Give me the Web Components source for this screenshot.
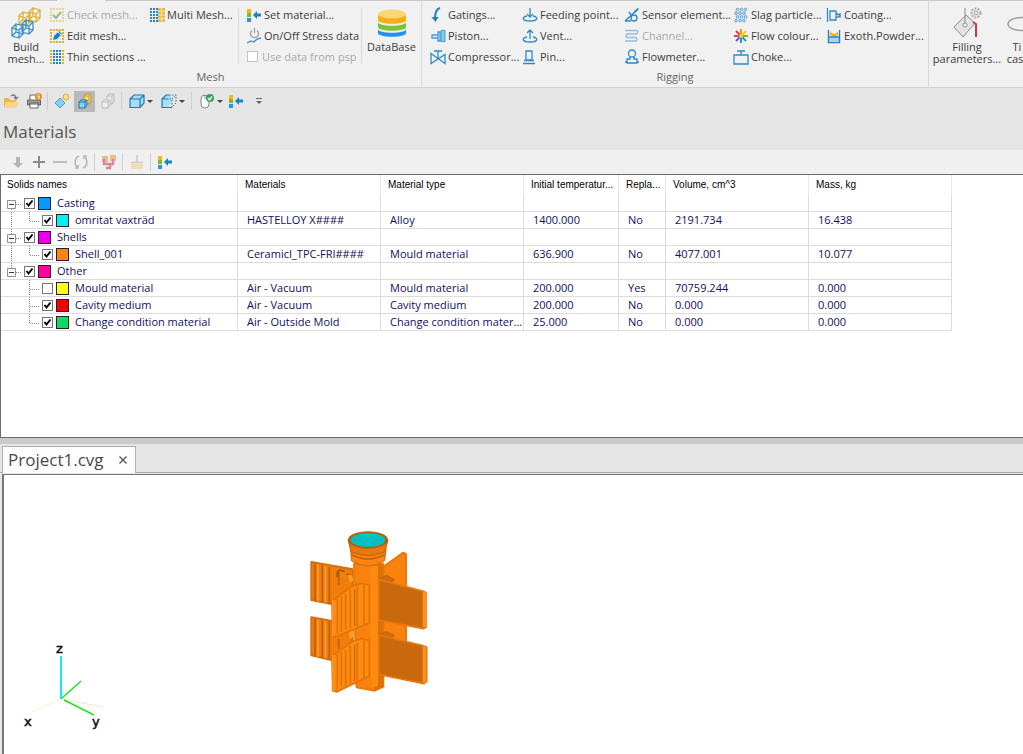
<!DOCTYPE html>
<html lang="en">
<head>
<meta charset="utf-8">
<title>Project1.cvg</title>
<style>
    html, body { margin: 0; height: 100%; overflow: hidden; }
    body { font: 11px/12px "Open Sans", "Noto Sans", sans-serif; color: #3c3c3c; background: #e5e5e5; }
</style>
</head>
<body>
<casting-app></casting-app>

<script>
// small shared drawings
const LIST_ARROW = `<path fill="#f3b81f" d="M1 2h4v4H1z"/><path fill="#84b81c" d="M1 6h4v4H1z"/><path fill="#2196f3" d="M1 11h4v4H1z"/><path fill="#1583c4" d="M7 8l4-4v2.500h4v3h-4V12z"/>`;

function dots(x0, y0, cols, rows, step, size, color) {
    let d = '';
    for (let r = 0; r < rows; r++) {
        for (let c = 0; c < cols; c++) d += `M${x0 + c * step} ${y0 + r * step}h${size}v${size}h-${size}z`;
    }
    return `<path fill="${color}" d="${d}"/>`;
}

function rings() {
    let out = '';
    for (let r = 0; r < 4; r++) {
        for (let c = 0; c < 3; c++) out += `<circle cx="${(r % 2 ? 3 : 4.5) + c * 4}" cy="${2.5 + r * 3.7}" r="1.3"/>`;
    }
    return `<g fill="none" stroke="#4a9bd4">${out}</g>`;
}

// wire cube, all twelve edges
function wire(x, y) {
    return `M${x} ${y + 4}l4-4 7 2-4 4zv8l7 2v-8M${x + 7} ${y + 14}l4-4v-8M${x + 4} ${y}v8l7 2M${x + 4} ${y + 8}l-4 4`;
}

const CUBE = '<path d="M1 6l4-4h10v8l-4 4.500H1zM1 6h10v8.500M11 6l4-4"/>';

// name -> [viewBox size, markup]
const ICONS = {
    build: [32, `<g fill="none"><path stroke="#dfae2b" stroke-width="1.200" d="${wire(9, 5)}${wire(19, 1)}"/><path stroke="#3d8fc8" stroke-width="1.300" d="${wire(2, 17)}${wire(12, 13)}"/></g>`],
    check: [16, dots(1, 1, 5, 5, 3, 2, '#ecd28f') + '<path fill="#f1f1f1" d="M3.500 4h9v8h-9z"/><path fill="none" stroke="#8cbc9c" stroke-width="2" d="M4 8l3 3 5-6"/>'],
    edit: [16, dots(1, 1, 5, 5, 3, 2, '#e5ad2c') + '<path fill="#f1f1f1" d="M3.500 4h9v8h-9z"/><path fill="#1b7fd0" d="M4 12l1-4 5-5 3 3-5 5z"/><path stroke="#fff" d="M9 4l3 3"/>'],
    thin: [16, dots(1, 1, 1, 5, 3, 2, '#e5ad2c') + dots(4, 1, 3, 5, 3, 2, '#1b7fd0') + dots(13, 1, 1, 5, 3, 2, '#e5ad2c')],
    multi: [16, dots(1, 1, 3, 5, 3, 2, '#2b84c4') + '<path fill="#e9b949" d="M9 1h7v14H9z"/><path stroke="#f7e4b2" d="M12.500 1v14M9 4.500h7M9 8h7M9 11.500h7"/>'],
    setmat: [16, LIST_ARROW],
    power: [16, '<g fill="none"><path stroke="#999" stroke-width="1.200" d="M6 2.500a4 4 0 1 0 5 0M8.500 0v5"/><path stroke="#3d8fc8" stroke-width="1.300" d="M1 15l4-2 3 1 3-3 4-1"/></g>'],
    database: [32, `<path fill="#2491ee" d="M2 20v6c0 5 28 5 28 0v-6z"/><path fill="#f1f1f1" d="M2 17v5c0 5 28 5 28 0v-5z"/>
        <path fill="#7cc52e" d="M2 14v6c0 5 28 5 28 0v-6z"/><path fill="#f1f1f1" d="M2 11v4c0 5 28 5 28 0v-4z"/>
        <path fill="#f5ae16" d="M2 7v6c0 5 28 5 28 0V7z"/><ellipse cx="16" cy="7" rx="14" ry="4.500" fill="#f8d775"/>`],
    gating: [16, '<path fill="none" stroke="#2580bd" stroke-width="2" d="M10 1C6 2 5 6 5 12"/><path fill="#2580bd" d="M1.500 10h7l-3 5z"/>'],
    piston: [16, '<path fill="none" stroke="#3d9ad5" stroke-width="1.300" d="M2 7h6v3H2zM8 4h2v9H8z"/><path fill="#8fc7e8" stroke="#3d9ad5" d="M11 2.500h4v11h-4z"/>'],
    compressor: [16, '<path fill="none" stroke="#2f8ac6" stroke-width="1.300" d="M1 4.500v10l14-9v9zM4 2h8M8 2v7"/>'],
    feed: [16, '<path fill="none" stroke="#2f8ac6" stroke-width="1.300" d="M8 1v9M5 7l3 3 3-3M5 9C-1 10 0 14 8 14s9-4 3-5"/>'],
    vent: [16, '<path fill="none" stroke="#2f8ac6" stroke-width="1.300" d="M8 11V2M5 5l3-3 3 3M5 9C-1 10 0 14 8 14s9-4 3-5"/>'],
    pin: [16, '<path fill="none" stroke="#2f8ac6" stroke-width="1.300" d="M4 2h6v9H4zM2 11.500h10M1 14.500h12"/>'],
    sensor: [16, '<g fill="none" stroke="#2f8ac6" stroke-width="1.400"><path d="M1 14L14 2M7 8L5 5M1 14h6"/><circle cx="10" cy="11" r="3"/></g><path fill="#2f8ac6" d="M10 4l4-3 1 1-4 4z"/>'],
    channel: [16, '<path fill="none" stroke="#92c0dd" stroke-width="1.500" d="M1 2.500h12q2 2-1 3.500H3q-2 1.500 0 3.500h9q2 1.500 0 3.500H1"/>'],
    flowmeter: [16, '<g fill="none" stroke="#2f8ac6" stroke-width="1.300"><circle cx="8" cy="4.500" r="3.500"/><path d="M6 8v2H3v3H1M10 8v2h3v3h2M3 10v4h10v-4"/></g>'],
    slag: [16, rings()],
    colour: [16, `<g stroke-width="2"><path stroke="#e34234" d="M8 8L3 3"/><path stroke="#f39a1e" d="M8 8V1"/><path stroke="#f3c41e" d="M8 8l5-5"/><path stroke="#7ab929" d="M8 8h7"/>
        <path stroke="#21a38b" d="M8 8l5 5"/><path stroke="#2491ee" d="M8 8v7"/><path stroke="#7a52b8" d="M8 8l-5 5"/><path stroke="#d43f77" d="M8 8H1"/></g><circle cx="8" cy="8" r="2" fill="#f8cf3a"/>`],
    choke: [16, '<path fill="none" stroke="#2f8ac6" stroke-width="1.300" d="M1 6h14v9H1zM8 6V2M4 2h8"/>'],
    coating: [16, '<path fill="none" stroke="#2f8ac6" stroke-width="1.300" d="M1.500 1v14M4 4h6v9H4zM10 6l4 2.500-4 2.500M14 6v5"/>'],
    powder: [16, '<path fill="#f2b12a" d="M4 4l4 2 4-2v3l-4 2-4-2z"/><path fill="#a8d4f0" d="M3 9h10v4H3z"/><path fill="none" stroke="#2481c4" stroke-width="1.400" d="M2.500 2v12.500h11V2M2.500 9h11"/>'],
    filling: [32, `<path fill="#e3e3e3" stroke="#8a8a8a" d="M3 20L15 8l9 8-12 14z"/><path fill="none" stroke="#8a8a8a" d="M14 1v16"/><circle cx="14" cy="18" r="2" fill="#fff" stroke="#8a8a8a"/>
        <path fill="none" stroke="#d9343e" stroke-width="2" d="M22 15l3 2v13"/><circle cx="25" cy="6" r="4.500" fill="none" stroke="#aaa" stroke-width="2" stroke-dasharray="2 1.200"/><circle cx="25" cy="6" r="2" fill="none" stroke="#999"/>`],
    tilt: [32, '<ellipse cx="21" cy="17" rx="14" ry="6.500" fill="none" stroke="#999" stroke-width="1.300"/>'],
    open: [16, '<path fill="#e9b949" d="M1 5h5l1 2h6v8H1z"/><path fill="#f8d77d" d="M3 9h13l-3 6H1z"/><path fill="none" stroke="#777" stroke-width="1.300" d="M8 3c3-2 5-1 5 3M11 4l2 2 2-2"/>'],
    print: [16, '<path fill="#fff" stroke="#666" d="M4 7V2h7v5M4 11h8v4H4z"/><path fill="#9a9a9a" stroke="#666" d="M1.500 7h13v5h-2v-2h-9v2h-2z"/><circle cx="12.500" cy="3.500" r="3.500" fill="#f08a24"/><path stroke="#fff" d="M13 1l-1 2.500h1.500l-1 2.500" fill="none"/>'],
    diamond: [16, '<path fill="#8ecbf0" stroke="#4a9bd4" d="M6 5l5 5-5 5-5-5z"/><circle cx="12" cy="4" r="3" fill="#f8dc8c" stroke="#dfae2b"/>'],
    cubes: [16, '<path fill="#fbd97c" stroke="#c9961c" d="M7 3l2-2h5v8l-2 2H7zM7 3h5v8M12 3l2-2"/><path fill="#8fd0f5" stroke="#2078ad" d="M2 9l2-2h6v5l-2 3H2zM2 9h6v6M8 9l2-2"/>'],
    cubesoff: [16, '<g fill="#eee" stroke="#bbb"><path d="M7 3l2-2h5v8l-2 2H7zM7 3h5v8M12 3l2-2"/><path d="M2 9l2-2h6v5l-2 3H2zM2 9h6v6M8 9l2-2"/></g>'],
    cube: [16, `<g fill="#a6dcfa" stroke="#2078ad" stroke-width="1.200">${CUBE}</g>`],
    ghost: [16, '<path fill="#a6dcfa" d="M1 6l4-4h5v8l-4 4.500H1z"/><path fill="none" stroke="#2078ad" stroke-width="1.200" d="M11 14.500H1V6l4-4h3M1 6h5"/><path fill="none" stroke="#2078ad" stroke-dasharray="1.500 1.500" d="M8 2h7v8l-4 4M6 6h5v8M11 6l4-4"/>'],
    mouse: [16, '<rect x="2" y="2" width="8" height="13" rx="4" fill="#fff" stroke="#888"/><path stroke="#888" d="M6 2v4"/><circle cx="11" cy="5" r="4" fill="#3a9f52"/><path fill="none" stroke="#fff" stroke-width="1.300" d="M9 5l1.500 2L13 3.500"/>'],
    more: [16, '<path fill="#666" d="M5 5h6v1H5zM5 8h6l-3 3z"/>'],
    down: [16, '<path fill="#b5b5b5" d="M6 3h4v6h3l-5 5-5-5h3z"/>'],
    plus: [16, '<path fill="#8b8b8b" d="M7 2h2v5h5v2H9v5H7V9H2V7h5z"/>'],
    minus: [16, '<path fill="#bdbdbd" d="M1 7h14v2H1z"/>'],
    refresh: [16, '<path fill="none" stroke="#b5b5b5" stroke-width="1.500" d="M6 2C1 4 1 11 5 14M10 14c5-2 5-9 1-12M2 14h3v-3M14 2h-3v3"/>'],
    tree: [16, '<path fill="#e7bd8d" d="M1 2h6v6H1zM9 1h6v6H9z"/><path fill="none" stroke="#d5879b" stroke-width="2.500" d="M3 5v5h9V5M9 10v4H5"/>'],
    tray: [16, '<path fill="#f1dfa9" d="M2 10h12v5H2z"/><path stroke="#c9c9c9" stroke-width="1.500" d="M8 1v7M2 8.500h12"/>'],
};

// <ui-icon name="...">: one drawing out of ICONS
class UiIcon extends HTMLElement {
    connectedCallback() {
        const [size, markup] = ICONS[this.getAttribute('name')];
        this.attachShadow({ mode: 'open' }).innerHTML = `
<style>
    :host { display: block; flex: none; width: ${size}px; height: ${size}px; }
    svg { display: block; }
</style>
<svg width="${size}" height="${size}" viewBox="0 0 ${size} ${size}" aria-hidden="true">${markup}</svg>`;
    }
}

// <ribbon-button icon large disabled>Text</ribbon-button>
class RibbonButton extends HTMLElement {
    connectedCallback() {
        this.attachShadow({ mode: 'open' }).innerHTML = `
<style>
    :host { display: block; }
    button {
        display: flex; align-items: center; gap: 2px; height: 21px; padding: 0;
        border: 0; background: none; font: inherit; color: inherit; white-space: nowrap;
    }
    button:disabled { color: #a9a9a9; }
    :host([large]) button {
        flex-direction: column; width: 100%; height: 63px; padding-top: 3px; text-align: center;
    }
</style>
<button ${this.hasAttribute('disabled') ? 'disabled' : ''}>
    <ui-icon name="${this.getAttribute('icon')}"></ui-icon>
    <span><slot></slot></span>
</button>`;
    }
}

// titled block of the ribbon
class RibbonGroup extends HTMLElement {
    connectedCallback() {
        this.attachShadow({ mode: 'open' }).innerHTML = `
<style>
    :host { display: flex; flex-direction: column; flex: none; border-right: 1px solid #d8d8d8; box-sizing: border-box; }
    .items { display: flex; height: 63px; padding-top: 3px; }
    .caption { height: 19px; padding-bottom: 1px; line-height: 19px; text-align: center; color: #666; }
</style>
<div class="items"><slot></slot></div>
<div class="caption">${this.getAttribute('label') || ''}</div>`;
    }
}

class AppRibbon extends HTMLElement {
    constructor() {
        super();
        this.attachShadow({ mode: 'open' }).innerHTML = `
<style>
    :host { display: block; background: #f1f1f1; border-bottom: 1px solid #d2d2d2; overflow: hidden; }
    .edge { display: flex; height: 1px; }
    .edge::before, .edge::after { content: ""; background: #c8c8c8; width: 57px; }
    .edge::after { flex: 1; margin-left: 48px; }
    .bar { display: flex; }
    .stack { flex: none; width: var(--w); }
    .rule { flex: none; width: 1px; height: 56px; margin: 4px 7px 0 0; background: #d8d8d8; }
    .rule.tight { margin-right: 0; }
    .lead { padding-left: 3px; }
    .indent { padding-left: 8px; }
    label { display: flex; align-items: center; gap: 4px; height: 21px; color: #a9a9a9; white-space: nowrap; }
    input { appearance: none; width: 11px; height: 11px; margin: 0 0 0 1px; border: 1px solid #c4c4c4; background: #fff; }
    ribbon-group:last-child { border: 0; }
</style>
<div class="edge"></div>
<div class="bar">
    <ribbon-group label="Mesh">
        <ribbon-button class="stack lead" style="--w:46px" large icon="build">Build<br>mesh...</ribbon-button>
        <div class="stack" style="--w:100px">
            <ribbon-button icon="check" disabled>Check mesh...</ribbon-button>
            <ribbon-button icon="edit">Edit mesh...</ribbon-button>
            <ribbon-button icon="thin">Thin sections ...</ribbon-button>
        </div>
        <div class="stack" style="--w:89px">
            <ribbon-button icon="multi">Multi Mesh...</ribbon-button>
        </div>
        <div class="rule"></div>
        <div class="stack" style="--w:115px">
            <ribbon-button icon="setmat">Set material...</ribbon-button>
            <ribbon-button icon="power">On/Off Stress data</ribbon-button>
            <label><input type="checkbox" disabled>Use data from psp</label>
        </div>
        <div class="rule tight"></div>
        <ribbon-button class="stack" style="--w:59px" large icon="database">DataBase</ribbon-button>
    </ribbon-group>
    <ribbon-group label="Rigging">
        <div class="stack indent" style="--w:92px">
            <ribbon-button icon="gating">Gatings...</ribbon-button>
            <ribbon-button icon="piston">Piston...</ribbon-button>
            <ribbon-button icon="compressor">Compressor...</ribbon-button>
        </div>
        <div class="stack" style="--w:102px">
            <ribbon-button icon="feed">Feeding point...</ribbon-button>
            <ribbon-button icon="vent">Vent...</ribbon-button>
            <ribbon-button icon="pin">Pin...</ribbon-button>
        </div>
        <div class="stack" style="--w:109px">
            <ribbon-button icon="sensor">Sensor element...</ribbon-button>
            <ribbon-button icon="channel" disabled>Channel...</ribbon-button>
            <ribbon-button icon="flowmeter">Flowmeter...</ribbon-button>
        </div>
        <div class="stack" style="--w:93px">
            <ribbon-button icon="slag">Slag particle...</ribbon-button>
            <ribbon-button icon="colour">Flow colour...</ribbon-button>
            <ribbon-button icon="choke">Choke...</ribbon-button>
        </div>
        <div class="stack" style="--w:102px">
            <ribbon-button icon="coating">Coating...</ribbon-button>
            <ribbon-button icon="powder">Exoth.Powder...</ribbon-button>
        </div>
    </ribbon-group>
    <ribbon-group>
        <ribbon-button class="stack" style="--w:76px" large icon="filling">Filling<br>parameters...</ribbon-button>
        <ribbon-button class="stack" style="--w:24px" large icon="tilt">Ti<br>cast</ribbon-button>
    </ribbon-group>
</div>`;
    }
}

// <tool-button icon label menu active>
class ToolButton extends HTMLElement {
    connectedCallback() {
        this.attachShadow({ mode: 'open' }).innerHTML = `
<style>
    :host { display: block; flex: none; }
    button { display: flex; align-items: center; justify-content: center; gap: 2px; min-width: 21px; height: 21px; padding: 0; border: 0; background: none; }
    :host([active]) button { background: #b9b9b9; }
    :host([menu]) button::after { content: ""; border: 3px solid transparent; border-top-color: #444; border-bottom: 0; }
</style>
<button aria-label="${this.getAttribute('label')}"><ui-icon name="${this.getAttribute('icon')}"></ui-icon></button>`;
    }
}

class QuickToolbar extends HTMLElement {
    constructor() {
        super();
        this.attachShadow({ mode: 'open' }).innerHTML = `
<style>
    :host { display: flex; align-items: center; gap: 2px; height: 26px; }
    i { width: 1px; height: 18px; margin: 0 1px; background: #cfcfcf; }
    .gap { margin-left: 4px; }
    .wide { margin-left: 6px; }
</style>
<tool-button icon="open" label="Open"></tool-button>
<tool-button icon="print" label="Print"></tool-button>
<i></i>
<tool-button icon="diamond" label="Geometry"></tool-button>
<tool-button icon="cubes" label="Solids" active></tool-button>
<tool-button icon="cubesoff" label="Hidden solids"></tool-button>
<i></i>
<tool-button icon="cube" label="View" menu class="gap"></tool-button>
<tool-button icon="ghost" label="Transparent view" menu class="wide"></tool-button>
<i class="gap"></i>
<tool-button icon="mouse" label="Mouse mode" menu class="gap"></tool-button>
<tool-button icon="setmat" label="Set material"></tool-button>
<tool-button icon="more" label="More"></tool-button>`;
    }
}

const COLUMNS = [
    ['Solids names', 238], ['Materials', 143], ['Material type', 143], ['Initial temperatur...', 95],
    ['Repla...', 47], ['Volume, cm^3', 143], ['Mass, kg', 143],
];

// level, line, checked, colour, name, cells; line tells if the branch goes on below the row
const SOLIDS = [
    [1, true, true, '#0a98ff', 'Casting', []],
    [2, false, true, '#00f3f3', 'omritat vaxträd', ['HASTELLOY X####', 'Alloy', '1400.000', 'No', '2191.734', '16.438']],
    [1, true, true, '#ea00ea', 'Shells', []],
    [2, false, true, '#ff8512', 'Shell_001', ['CeramicI_TPC-FRI####', 'Mould material', '636.900', 'No', '4077.001', '10.077']],
    [1, false, true, '#ff00a2', 'Other', []],
    [2, true, false, '#ffff00', 'Mould material', ['Air - Vacuum', 'Mould material', '200.000', 'Yes', '70759.244', '0.000']],
    [2, true, true, '#fb0000', 'Cavity medium', ['Air - Vacuum', 'Cavity medium', '200.000', 'No', '0.000', '0.000']],
    [2, false, true, '#0bd968', 'Change condition material', ['Air - Outside Mold', 'Change condition mater...', '25.000', 'No', '0.000', '0.000']],
];

class MaterialsGrid extends HTMLElement {
    constructor() {
        super();
        this.attachShadow({ mode: 'open' }).innerHTML = `
<style>
    :host { display: block; border: 1px solid #6b6b6b; border-width: 1px 0 1px 1px; background: #fff; overflow: hidden; }
    table { table-layout: fixed; width: 951px; margin-left: -1px; border-collapse: separate; border-spacing: 0; font-size: 11px; line-height: 16px; }
    th, td { height: 16px; padding: 0 0 0 9px; border-right: 1px solid #dcdcdc; border-bottom: 1px solid #dcdcdc; white-space: nowrap; overflow: hidden; }
    th { height: 20px; padding-left: 7px; border-bottom: 0; font: 10px/16px "Liberation Sans", Arial, sans-serif; text-align: left; color: #000; border-color: #e8e8e8; }
    td { color: #10105c; }
    td:first-child { padding: 0; }
    .name, label { display: flex; align-items: center; height: 16px; }
    svg { display: block; flex: none; }
    input {
        appearance: none; flex: none; width: 11px; height: 11px; margin: 0 3px 0 0;
        border: 1px solid #777; background: #fff;
    }
    input:checked { background: #fff url("data:image/svg+xml,%3Csvg xmlns='http://www.w3.org/2000/svg' viewBox='0 0 9 9'%3E%3Cpath d='M1.500 4l2 2.500 4-5' fill='none' stroke='%23000' stroke-width='2'/%3E%3C/svg%3E"); }
    .swatch { box-sizing: border-box; width: 13px; height: 13px; margin-right: 6px; border: 1px solid #222; background: var(--c); }
</style>
<table>
    <colgroup>${COLUMNS.map(c => `<col style="width:${c[1]}px">`).join('')}</colgroup>
    <thead><tr>${COLUMNS.map(c => `<th>${c[0]}</th>`).join('')}</tr></thead>
    <tbody>${SOLIDS.map((row, i) => this.row(row, i)).join('')}</tbody>
</table>`;
    }

    row([level, line, checked, color, name, cells], index) {
        const values = cells.length ? cells : Array(6).fill('');
        return `<tr><td><div class="name">${this.branch(level, line, index)}<label><input type="checkbox" ${checked ? 'checked' : ''}><span class="swatch" style="--c:${color}"></span>${name}</label></div></td>
            ${values.map(v => `<td>${v}</td>`).join('')}</tr>`;
    }

    // dotted tree lines and the expander box
    branch(level, line, index) {
        const width = level === 1 ? 24 : 42;
        let d = '';
        let box = '';
        if (level === 1) {
            d = `M16 9.500h6${index ? 'M11.500 0v5' : ''}${line ? 'M11.500 14v4' : ''}`;
            box = '<path fill="#fff" stroke="#8e8e9e" d="M7.500 5.500h8v8h-8z"/><path stroke="#333388" d="M9 9.500h5"/>';
        } else {
            d = `M29.500 0v${line ? 18 : 9}M30 9.500h10${index < 4 ? 'M11.500 0v18' : ''}`;
        }
        return `<svg width="${width}" height="17" viewBox="0 0 ${width} 17"><path fill="none" stroke="#888" stroke-dasharray="1 1" d="${d}"/>${box}</svg>`;
    }
}

class MaterialsPanel extends HTMLElement {
    constructor() {
        super();
        this.attachShadow({ mode: 'open' }).innerHTML = `
<style>
    :host { display: flex; flex-direction: column; }
    h1 { margin: 0; padding: 0 3px; font-size: 17px; line-height: 36px; font-weight: normal; color: #555; }
    .tools { display: flex; align-items: center; height: 24px; padding-left: 7px; background: #f0f0f0; }
    i { width: 1px; height: 18px; margin: 0 3px; background: #d0d0d0; }
    materials-grid { flex: 1; }
</style>
<h1>Materials</h1>
<div class="tools">
    <tool-button icon="down" label="Move down"></tool-button>
    <tool-button icon="plus" label="Add"></tool-button>
    <tool-button icon="minus" label="Remove"></tool-button>
    <tool-button icon="refresh" label="Refresh"></tool-button>
    <i></i>
    <tool-button icon="tree" label="Hierarchy"></tool-button>
    <i></i>
    <tool-button icon="tray" label="Insert"></tool-button>
    <i></i>
    <tool-button icon="setmat" label="Set material"></tool-button>
</div>
<materials-grid></materials-grid>`;
    }
}

class DocumentTabs extends HTMLElement {
    constructor() {
        super();
        this.attachShadow({ mode: 'open' }).innerHTML = `
<style>
    :host { display: flex; height: 29px; padding: 2px 2px 0; border-bottom: 1px solid #aaa; box-sizing: border-box; }
    .tab { display: flex; align-items: center; gap: 14px; height: 26px; padding: 0 7px 0 5px; border: 1px solid #b0b0b0; border-bottom: 0; background: #fdfdfd; }
    .tab span { font-size: 17px; line-height: 26px; color: #4a4a4a; }
    button { padding: 0; border: 0; background: none; }
    svg { display: block; }
</style>
<div class="tab">
    <span><slot></slot></span>
    <button aria-label="Close"><svg width="10" height="10" viewBox="0 0 10 10"><path stroke="#555" stroke-width="1.300" d="M1.500 1.500l7 7M8.500 1.500l-7 7"/></svg></button>
</div>`;
    }
}

// drawing area: the cast part and the axis cross
class ModelView extends HTMLElement {
    constructor() {
        super();
        this.attachShadow({ mode: 'open' }).innerHTML = `
<style>
    :host { display: block; position: relative; margin: 1px 0 0 2px; border: 1px solid #777; border-width: 1px 0 0 2px; background: #fff; overflow: hidden; }
    .part { position: absolute; left: 286px; top: 39px; }
    .axes { position: absolute; left: 16px; top: 164px; }
    text { font: 13px "DejaVu Sans", sans-serif; fill: #111; stroke: #111; stroke-width: .5px; }
</style>
<svg class="part" width="160" height="190" viewBox="0 0 480 570">
    <g stroke-linejoin="round" stroke-width="6">
        <path fill="#f07e0c" stroke="#d86f0a" d="M64 144l124 22v90l-64 14-60-12z"/>
        <path fill="#f07e0c" stroke="#d86f0a" d="M64 310l124 22v90l-64 16-60-14z"/>
        <path fill="#f9820e" stroke="#e87a0c" d="M278 160l62-44 8 5v280l-70-20z"/>
        <path fill="#f9820e" stroke="#e87a0c" d="M192 150h88v368l-26 12-54-10-2-16z"/>
        <path fill="#dd710a" stroke="none" d="M252 150l28 4v364l-28 13z"/>
        <path fill="#ff8a10" stroke="none" d="M242 155h22v360l-22 8z"/>
    </g>
    <g fill="none" stroke="#bd5f06" stroke-width="5">
        <path d="M75 148v112M97 154v112M118 160v110M146 172v40M75 315v110M97 320v112M118 322v114M146 375v30"/>
    </g>
    <path fill="none" stroke="#ff9a2c" stroke-width="5" d="M84 150v112M106 156v112M84 318v110M106 320v112"/>
    <path fill="none" stroke="#a85303" stroke-width="5" d="M142 190v-16l8-6 14 4M170 180l12 4 6 12"/>
    <path fill="#ff9a2c" d="M174 182l12 2 4 14-10 8zM178 350l12 0v20l-12 4z"/>
    <g stroke-linejoin="round" stroke-width="5">
        <path fill="#ff8a10" stroke="#e0740a" d="M126 262l60-46 26-8 26 5v114l-24 10-80 32-6-6z"/>
        <path fill="#ff8a10" stroke="#e0740a" d="M126 427l62-45 26-8 24 5v108l-26 12-72 35-12-5z"/>
        <path fill="#d26c0a" stroke="#c9680c" d="M268 194l22-9 22 12-8 8zM268 360l22-6 22 10-8 8z"/>
        <path fill="#c9680c" stroke="#e57a0a" d="M266 196l134 36 8 4v104l-8 4-134-26z"/>
        <path fill="#c9680c" stroke="#e57a0a" d="M266 363l132 32 12 4v104l-8 6-136-28z"/>
    </g>
    <g fill="none" stroke="#e0740a" stroke-width="5">
        <path d="M142 255v104M154 246v107M167 238v110M181 227v116M202 215v122M222 212v120M142 420v106M154 414v106M167 407v108M181 396v113M202 386v118M222 380v114"/>
    </g>
    <path fill="none" stroke="#cc680a" stroke-width="4" d="M194 226v110M194 392v110"/>
    <path fill="#ff9020" d="M126 258h6v108h-6zM126 424h6v110h-6zM398 234h10v106h-10zM398 398h10v108h-10z"/>
    <path fill="#ff8510" stroke="#ce690a" stroke-width="3" d="M182 104l2 36q50 32 100 0l4-36z"/>
    <path fill="#e9790a" stroke="#b95d08" stroke-width="3" d="M174 77l9 36q52 24 102 0l9-36z"/>
    <path fill="none" stroke="#b95d08" stroke-width="4" d="M184 122q50 26 100 0"/>
    <ellipse cx="234" cy="78" rx="60" ry="26" fill="#b95d08"/>
    <ellipse cx="234" cy="78" rx="52" ry="21" fill="#05bfc0"/>
</svg>
<svg class="axes" width="100" height="96" viewBox="0 0 100 96">
    <g fill="none">
        <path stroke="#f8f4c4" d="M41 60L12 73"/>
        <path stroke="#f8e8c0" d="M41 60l42 8"/>
        <path stroke="#1fe01f" stroke-width="1.500" d="M41 60l20-18"/>
        <path stroke="#1fe01f" stroke-width="1.500" d="M44 61l30 15"/>
        <path stroke="#12eef0" stroke-width="2" d="M41 17v43"/>
    </g>
    <text x="36" y="14">z</text><text x="4" y="87">x</text><text x="72" y="87">y</text>
</svg>`;
    }
}

class CastingApp extends HTMLElement {
    constructor() {
        super();
        this.attachShadow({ mode: 'open' }).innerHTML = `
<style>
    :host { display: flex; flex-direction: column; height: 100vh; }
    materials-panel { flex: 0 0 43%; }
    .splitter { flex: none; height: 6px; background: #cacaca; }
    model-view { flex: 1; }
</style>
<app-ribbon></app-ribbon>
<quick-toolbar></quick-toolbar>
<materials-panel></materials-panel>
<div class="splitter"></div>
<document-tabs>Project1.cvg</document-tabs>
<model-view></model-view>`;
    }
}

customElements.define('ui-icon', UiIcon);
customElements.define('ribbon-button', RibbonButton);
customElements.define('ribbon-group', RibbonGroup);
customElements.define('app-ribbon', AppRibbon);
customElements.define('tool-button', ToolButton);
customElements.define('quick-toolbar', QuickToolbar);
customElements.define('materials-grid', MaterialsGrid);
customElements.define('materials-panel', MaterialsPanel);
customElements.define('document-tabs', DocumentTabs);
customElements.define('model-view', ModelView);
customElements.define('casting-app', CastingApp);
</script>
</body>
</html>
